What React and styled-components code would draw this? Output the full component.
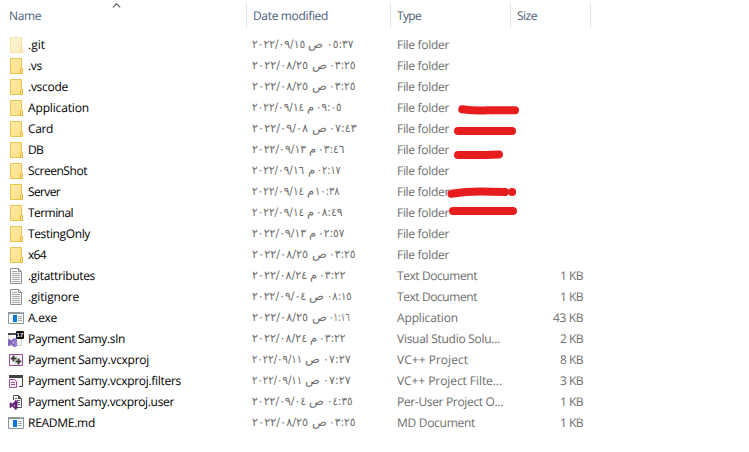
import React, { useLayoutEffect, useRef, useState } from "react";
import styled, { createGlobalStyle, css } from "styled-components";

const GlobalStyle = createGlobalStyle`
  * { box-sizing: border-box; }
  body { margin: 0; background: #fff; }
`;

const Explorer = styled.main`
  position: relative;
  width: 749px;
  height: 452px;
  overflow: hidden;
  background: #fff;
  font-family: "Open Sans", "Noto Sans", sans-serif;
  font-size: 12px;
  text-rendering: geometricPrecision;
`;

const columns = css`
  display: grid;
  grid-template-columns: 247px 144px 120px 80px;
`;

const Header = styled.header`
  ${columns}
  height: 28px;
  padding-top: 3px;
  color: #4c607a;
`;

const HeaderCell = styled.div`
  position: relative;
  height: 25px;
  padding-left: ${(p) => p.$pad || 6}px;
  border-right: 1px solid #e5e5e5;
  line-height: 25px;
`;

const SortArrow = styled.svg`
  position: absolute;
  left: 112px;
  top: 0;
`;

const List = styled.div`
  padding-top: 6px;
`;

const Row = styled.div`
  ${columns}
  height: 21px;
  line-height: 21px;
  color: #6d6d6d;
`;

const NameCell = styled.div`
  display: flex;
  align-items: center;
  gap: 4px;
  padding-left: 8px;
  color: #000;
`;

const Cell = styled.div`
  padding-left: 6px;
`;

const SizeCell = styled.div`
  display: flex;
  justify-content: flex-end;
  padding-right: 8px;
`;

const DateCell = styled.div`
  display: flex;
  padding-left: 5px;
  font-family: "DejaVu Sans", sans-serif;
  font-size: 11.5px;
`;

const FitBox = styled.span`
  display: block;
  flex: none;
  width: ${(p) => p.$w}px;
  margin-left: ${(p) => p.$gap || 0}px;
  white-space: pre;
  direction: ltr;
  unicode-bidi: bidi-override;
`;

const Stretched = styled.span`
  display: inline-block;
  transform-origin: 0 50%;
  unicode-bidi: bidi-override;
`;

const Icon = styled.svg`
  display: block;
  flex: none;
  width: 16px;
  height: 16px;
  opacity: ${(p) => (p.$faded ? 0.5 : 1)};
`;

const Marks = styled.svg`
  position: absolute;
  left: 440px;
  top: 96px;
`;

/* Tracks the text so that it fills exactly the given width. */
function Fit({ w, children }) {
  const ref = useRef(null);
  const [spacing, setSpacing] = useState(0);
  useLayoutEffect(() => {
    const range = document.createRange();
    range.selectNodeContents(ref.current);
    const natural = range.getBoundingClientRect().width;
    setSpacing((w - natural) / children.length);
  }, [w, children]);
  return (
    <FitBox ref={ref} $w={w} style={{ letterSpacing: spacing }}>
      {children}
    </FitBox>
  );
}

/* Condenses or widens the glyphs themselves to the given width. */
function Stretch({ w, gap, children }) {
  const ref = useRef(null);
  const [scale, setScale] = useState(1);
  useLayoutEffect(() => {
    setScale(w / ref.current.offsetWidth);
  }, [w, children]);
  return (
    <FitBox $w={w} $gap={gap}>
      <Stretched ref={ref} style={{ transform: `scaleX(${scale})` }}>
        {children}
      </Stretched>
    </FitBox>
  );
}

function FolderIcon({ faded }) {
  return (
    <Icon viewBox="0 0 16 16" $faded={faded}>
      <defs>
        <linearGradient id="folder" x1="0" y1="0" x2="1" y2="1">
          <stop offset="0" stopColor="#ffeaa6" />
          <stop offset="1" stopColor="#fddf83" />
        </linearGradient>
      </defs>
      <path d="M2.5.5h11v10h1v5h-12z" fill="url(#folder)" stroke="#eac54f" />
      <path d="M12.5 15.5v-4.2l1-.8h1v5z" fill="#ffe591" stroke="#e6bd43" />
    </Icon>
  );
}

function TextIcon() {
  return (
    <Icon viewBox="0 0 16 16">
      <path d="M2.5.5h8l3 3v12h-11z" fill="#fafafa" stroke="#8f8f8f" />
      <path d="M10.5.5v3h3" fill="none" stroke="#8f8f8f" />
      <path d="M4 3.5h5M4 5.5h8M4 7.5h8M4 9.5h8M4 11.5h8M4 13.5h8" stroke="#a6a6a6" />
    </Icon>
  );
}

function AppIcon() {
  return (
    <Icon viewBox="0 0 16 16">
      <path d="M.5 2.5h15v11H.5z" fill="#f7f9fa" stroke="#8b9699" />
      <path d="M0 2h16v2H0z" fill="#8b9699" />
      <path d="M12 2.7h1M14 2.7h1" stroke="#fff" strokeWidth=".7" />
      <path d="M5 5h4v7H5z" fill="#0877d7" />
      <path d="M10 6.5h4M10 8.5h4M10 10.5h4" stroke="#a3abae" />
    </Icon>
  );
}

const Badge = styled.text`
  font: bold 6px "Liberation Sans", sans-serif;
  fill: #fff;
`;

function SolutionIcon() {
  return (
    <Icon viewBox="0 0 16 16">
      <path d="M.5 2.5h13v12H.5z" fill="#f5f5f5" stroke="#d0d0d0" />
      <path d="M0 2h8v2H0z" fill="#4a4a4a" />
      <rect x="8" width="8" height="8" rx="1.2" fill="#080808" />
      <Badge x="8.6" y="6">17</Badge>
      <path
        d="M1 9v5l3-2.5zM6.5 7.5v8L1.5 10.2M6.5 7.8l-5 4.7"
        fill="none"
        stroke="#8060c0"
        strokeWidth="1.8"
        strokeLinejoin="round"
      />
      <path d="M6 7l3 1v7l-3 1z" fill="#9577d0" />
    </Icon>
  );
}

function ProjectIcon() {
  return (
    <Icon viewBox="0 0 16 16">
      <path d="M1.5 2.5h13v11h-13z" fill="#f6f4f6" stroke="#9b4f96" />
      <path d="M5.5 3.5v6M2.8 6.5h5.8M10.5 6.5v6M7.5 9.5h5.8" stroke="#3f3f3f" strokeWidth="2" />
    </Icon>
  );
}

function FiltersIcon() {
  return (
    <Icon viewBox="0 0 16 16">
      <path d="M1.5 2.5h13v11h-13z" fill="#f5f5f5" />
      <path d="M1 2h14v3H1z" fill="#424242" />
      <path d="M14.5 3v10.5H11" fill="none" stroke="#424242" />
      <path d="M1.5 6.5h5l2 2v6h-7z" fill="#f6edf5" stroke="#9b4f96" />
      <path d="M3 9.5h4M3 11.5h4" stroke="#9b4f96" />
    </Icon>
  );
}

function UserIcon() {
  return (
    <Icon viewBox="0 0 16 16">
      <path d="M5.5 6V1.5h5l3 3v9H9" fill="#f6f6f6" stroke="#555" />
      <path d="M10 1v4h4z" fill="#555" />
      <path d="M7 4.5h2M9 6.5h3M9 8.5h3M10 10.5h2" stroke="#666" />
      <path
        d="M2.5 8.5v4L7.5 8v6.5L2.5 9.5M2.5 12l5-3.8"
        fill="none"
        stroke="#68217a"
        strokeWidth="1.7"
      />
      <path d="M7 6l2.5 1v7.3L7 15.5z" fill="#68217a" />
    </Icon>
  );
}

const icons = {
  folder: FolderIcon,
  text: TextIcon,
  app: AppIcon,
  sln: SolutionIcon,
  proj: ProjectIcon,
  filters: FiltersIcon,
  user: UserIcon,
};

const types = {
  "File folder": 52,
  "Text Document": 80,
  Application: 61,
  "Visual Studio Solu...": 103,
  "VC++ Project": 71,
  "VC++ Project Filte...": 105,
  "Per-User Project O...": 106,
  "MD Document": 78,
};

/* icon, name, name width, [date, end, mark, start, time, start, end], type, size */
const files = [
  ["folder", ".git", 17, ["٢٠٢٢/٠٩/١٥", 305, "ص", 308, "٠٥:٣٧", 328, 354], "File folder"],
  ["folder", ".vs", 14, ["٢٠٢٢/٠٨/٢٥", 308, "ص", 312, "٠٣:٢٥", 330, 356], "File folder"],
  ["folder", ".vscode", 40, ["٢٠٢٢/٠٨/٢٥", 308, "ص", 312, "٠٣:٢٥", 330, 356], "File folder"],
  ["folder", "Application", 61, ["٢٠٢٢/٠٩/١٤", 304, "م", 307, "٠٩:٠٥", 317, 342], "File folder"],
  ["folder", "Card", 25, ["٢٠٢٢/٠٩/٠٨", 308, "ص", 312, "٠٧:٤٣", 330, 357], "File folder"],
  ["folder", "DB", 15, ["٢٠٢٢/٠٩/١٣", 306, "م", 309, "٠٣:٤٦", 319, 345], "File folder"],
  ["folder", "ScreenShot", 59, ["٢٠٢٢/٠٩/١٦", 304, "م", 308, "٠٢:١٧", 318, 341], "File folder"],
  ["folder", "Server", 32, ["٢٠٢٢/٠٩/١٤", 304, "م", 307, "١٠:٣٨", 316, 340], "File folder"],
  ["folder", "Terminal", 45, ["٢٠٢٢/٠٩/١٤", 304, "م", 307, "٠٨:٤٩", 317, 343], "File folder"],
  ["folder", "TestingOnly", 62, ["٢٠٢٢/٠٩/١٣", 306, "م", 309, "٠٢:٥٧", 319, 345], "File folder"],
  ["folder", "x64", 18, ["٢٠٢٢/٠٨/٢٥", 308, "ص", 312, "٠٣:٢٥", 330, 356], "File folder"],
  ["text", ".gitattributes", 67, ["٢٠٢٢/٠٨/٢٤", 307, "م", 310, "٠٣:٢٢", 320, 346], "Text Document", "1 KB"],
  ["text", ".gitignore", 51, ["٢٠٢٢/٠٩/٠٤", 306, "ص", 309, "٠٨:١٥", 328, 352], "Text Document", "1 KB"],
  ["app", "A.exe", 29, ["٢٠٢٢/٠٨/٢٥", 308, "ص", 312, "٠١:١٦", 330, 350], "Application", "43 KB"],
  ["sln", "Payment Samy.sln", 97, ["٢٠٢٢/٠٨/٢٤", 307, "م", 310, "٠٣:٢٢", 320, 346], "Visual Studio Solu...", "2 KB"],
  ["proj", "Payment Samy.vcxproj", 121, ["٢٠٢٢/٠٩/١١", 302, "ص", 305, "٠٧:٢٧", 324, 351], "VC++ Project", "8 KB"],
  ["filters", "Payment Samy.vcxproj.filters", 153, ["٢٠٢٢/٠٩/١١", 302, "ص", 305, "٠٧:٢٧", 324, 351], "VC++ Project Filte...", "3 KB"],
  ["user", "Payment Samy.vcxproj.user", 146, ["٢٠٢٢/٠٩/٠٤", 306, "ص", 309, "٠٤:٣٥", 328, 353], "Per-User Project O...", "1 KB"],
  ["app", "README.md", 67, ["٢٠٢٢/٠٨/٢٥", 308, "ص", 312, "٠٣:٢٥", 330, 356], "MD Document", "1 KB"],
];

function FileRow({ file }) {
  const [icon, name, width, date, type, size] = file;
  const [day, dayEnd, mark, markStart, time, timeStart, timeEnd] = date;
  const FileIcon = icons[icon];
  const markWidth = mark === "ص" ? 15 : 7;
  return (
    <Row>
      <NameCell>
        <FileIcon faded={name === ".git"} />
        <Fit w={width}>{name}</Fit>
      </NameCell>
      <DateCell>
        <Stretch w={dayEnd - 252}>{day}</Stretch>
        <Stretch w={markWidth} gap={markStart - dayEnd}>{mark}</Stretch>
        <Stretch w={timeEnd - timeStart + 1} gap={timeStart - markStart - markWidth - 1}>{time}</Stretch>
      </DateCell>
      <Cell>
        <Fit w={types[type]}>{type}</Fit>
      </Cell>
      <SizeCell>{size && <Fit w={size.length > 4 ? 30 : 23}>{size}</Fit>}</SizeCell>
    </Row>
  );
}

export default function App() {
  return (
    <>
      <GlobalStyle />
      <Explorer>
        <Header>
          <HeaderCell $pad={9}>
            <Fit w={32}>Name</Fit>
            <SortArrow width="9" height="8" viewBox="0 0 9 8">
              <path d="M.8 4.4L4.5.8l3.7 3.6" fill="none" stroke="#555" strokeWidth="1.1" />
            </SortArrow>
          </HeaderCell>
          <HeaderCell>
            <Fit w={75}>Date modified</Fit>
          </HeaderCell>
          <HeaderCell>
            <Fit w={24}>Type</Fit>
          </HeaderCell>
          <HeaderCell>
            <Fit w={20}>Size</Fit>
          </HeaderCell>
        </Header>
        <List>
          {files.map((file) => (
            <FileRow key={file[1]} file={file} />
          ))}
        </List>
        <Marks width="90" height="130" viewBox="440 96 90 130">
          <g fill="none" stroke="#e71d1d" strokeWidth="8" strokeLinecap="round" strokeLinejoin="round">
            <path d="M462.3 109.3Q475 111 488 110.3L515 110.3" />
            <path d="M458 131H512" />
            <path d="M458 155L485 155L499 154.4" />
            <path d="M451.5 193.8Q465 191.5 480 191.5L505 192" />
            <path d="M512 192h.1" />
            <path d="M453 211H513" />
          </g>
        </Marks>
      </Explorer>
    </>
  );
}
